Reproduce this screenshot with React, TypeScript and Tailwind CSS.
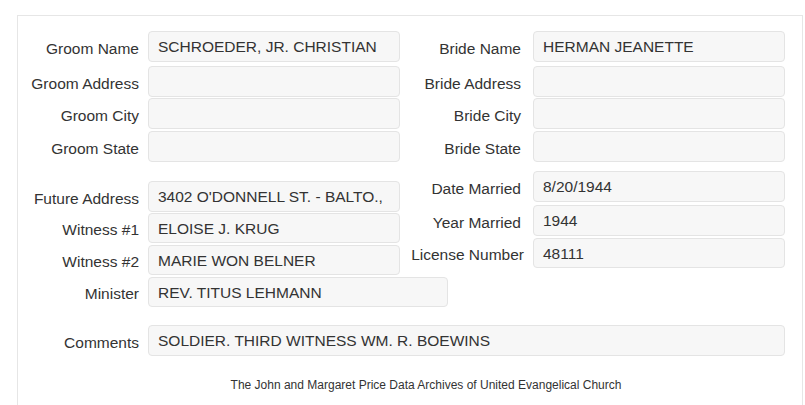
const groomRows = [
  { label: "Groom Name", value: "SCHROEDER, JR. CHRISTIAN", gap: "mb-[4px]" },
  { label: "Groom Address", value: "", gap: "mb-[1px]" },
  { label: "Groom City", value: "", gap: "mb-[2px]" },
  { label: "Groom State", value: "", gap: "" },
];

const brideRows = [
  { label: "Bride Name", value: "HERMAN JEANETTE", gap: "mb-[4px]" },
  { label: "Bride Address", value: "", gap: "mb-[1px]" },
  { label: "Bride City", value: "", gap: "mb-[2px]" },
  { label: "Bride State", value: "", gap: "" },
];

const witnessRows = [
  { label: "Future Address", value: "3402 O'DONNELL ST. - BALTO.,", gap: "mb-[1px]", h: "h-[31px]" },
  { label: "Witness #1", value: "ELOISE J. KRUG", gap: "mb-[2px]", h: "h-[30px]" },
  { label: "Witness #2", value: "MARIE WON BELNER", gap: "mb-[2px]", h: "h-[30px]" },
];

const marriageRows = [
  { label: "Date Married", value: "8/20/1944", gap: "mb-[3px]", h: "h-[31px]" },
  { label: "Year Married", value: "1944", gap: "mb-[2px]", h: "h-[31px]" },
];

function Field({
  label,
  value,
  gap,
  h = "h-[31px]",
  boxW = "w-[252px]",
  labelW = "w-[121px]",
  space = "mr-[9px]",
}: {
  label: string;
  value: string;
  gap: string;
  h?: string;
  boxW?: string;
  labelW?: string;
  space?: string;
}) {
  return (
    <div className={`flex items-center ${gap}`}>
      <div className={`${labelW} shrink-0 text-right whitespace-nowrap pt-[4px] ${space}`}>{label}</div>
      <div
        className={`${boxW} ${h} shrink-0 flex items-center pl-[9px] pt-[1px] bg-[#f7f7f7] border border-[#e4e4e4] rounded-[4px] whitespace-nowrap overflow-hidden`}
      >
        {value}
      </div>
    </div>
  );
}

export default function App() {
  return (
    <div className="w-[805px] h-[405px] overflow-hidden bg-white text-[#333] text-[15.5px] font-['Liberation_Sans',Arial,sans-serif]">
      <div className="ml-[17px] mt-[15px] w-[786px] h-[420px] border border-[#e6e6e6] pt-[15px]">
        {/* bride / groom */}
        <div className="flex">
          <div className="w-[382px]">
            {groomRows.map((r) => (
              <Field key={r.label} {...r} />
            ))}
          </div>
          <div className="w-[385px]">
            {brideRows.map((r) => (
              <Field key={r.label} {...r} space="mr-[12px]" />
            ))}
          </div>
        </div>

        {/* witnesses / marriage */}
        <div className="flex mt-[9px]">
          <div className="w-[382px] pt-[10px]">
            {witnessRows.map((r) => (
              <Field key={r.label} {...r} />
            ))}
            <Field label="Minister" value="REV. TITUS LEHMANN" gap="" h="h-[30px]" boxW="w-[300px]" />
          </div>
          <div className="w-[385px]">
            {marriageRows.map((r) => (
              <Field key={r.label} {...r} space="mr-[12px]" />
            ))}
            <Field label="License Number" value="48111" gap="" h="h-[30px]" labelW="w-[124px]" />
          </div>
        </div>

        <div className="mt-[18px]">
          <Field label="Comments" value="SOLDIER. THIRD WITNESS WM. R. BOEWINS" gap="" boxW="w-[637px]" />
        </div>

        <div className="mt-[21px] pl-[32px] text-center text-[12px] leading-[17px]">
          The John and Margaret Price Data Archives of United Evangelical Church
        </div>
      </div>
    </div>
  );
}
